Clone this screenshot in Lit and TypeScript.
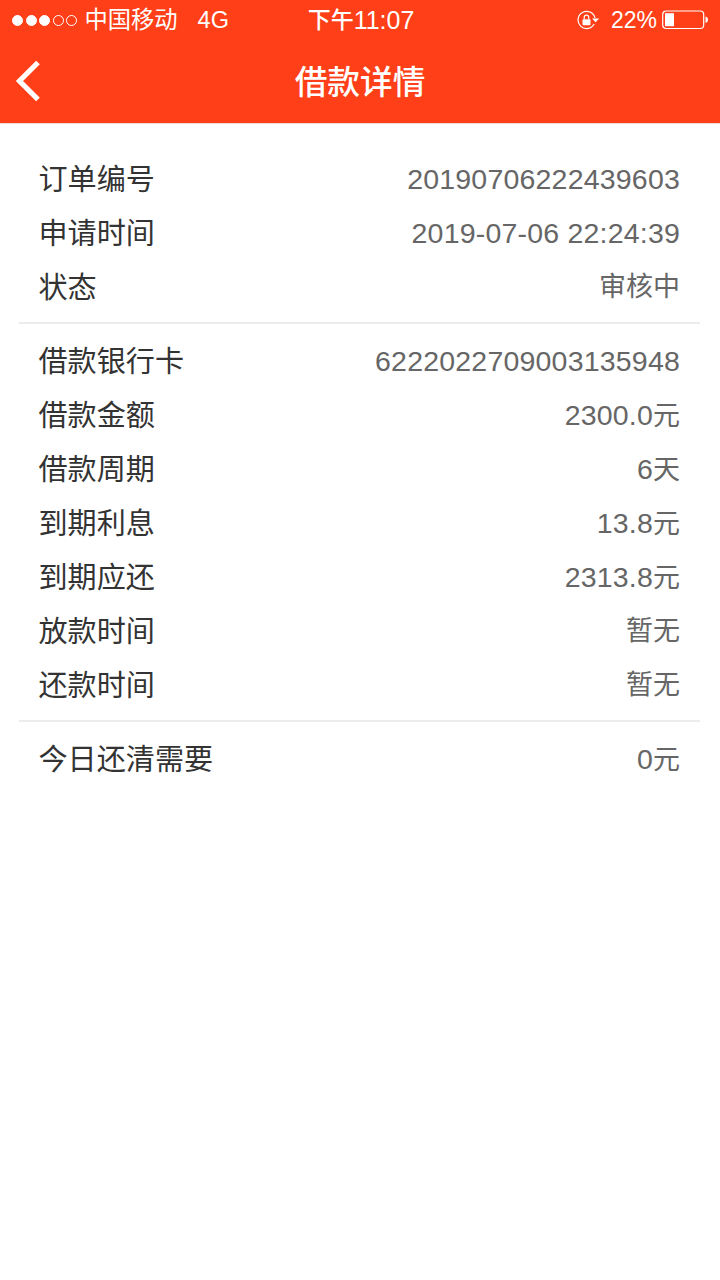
import { LitElement, html, css, svg } from "lit";
import { customElement } from "lit/decorators.js";

type Row = [string, string];
const sections: Row[][] = [
  [["订单编号", "20190706222439603"], ["申请时间", "2019-07-06 22:24:39"], ["状态", "审核中"]],
  [
    ["借款银行卡", "6222022709003135948"],
    ["借款金额", "2300.0元"],
    ["借款周期", "6天"],
    ["到期利息", "13.8元"],
    ["到期应还", "2313.8元"],
    ["放款时间", "暂无"],
    ["还款时间", "暂无"],
  ],
  [["今日还清需要", "0元"]],
];

@customElement("app-root")
export class AppRoot extends LitElement {
  static styles = css`
    :host {
      display: block;
      width: 720px;
      height: 1280px;
      background: #fff;
      font-family: "Liberation Sans", "Noto Sans CJK SC", sans-serif;
      overflow: hidden;
    }
    .top { background: #ff3f17; height: 123px; color: #fff; border-bottom: 1px solid #eadbd6; }
    .status { height: 40px; display: grid; grid-template-columns: 1fr auto 1fr; align-items: center; padding: 0 12px 0 12px; font-size: 23px; white-space: nowrap; }
    .left, .right { display: flex; align-items: center; }
    .right { justify-content: flex-end; }
    .dots { display: flex; gap: 2.6px; margin-right: 7px; }
    .dot { width: 11px; height: 11px; border-radius: 50%; border: 1.1px solid #fff; box-sizing: border-box; }
    .dot.on { background: #fff; }
    .cjk { line-height: 40px; height: 40px; font-size: 23.3px; }
    .net { margin-left: 20px; font-size: 23.5px; }
    .time { display: flex; align-items: center; height: 40px; font-weight: 500; margin-left: 2px; }
    .time .c { font-size: 23px; line-height: 40px; }
    .time .d { font-size: 25px; }
    .lock { margin-right: 10px; display: block; }
    .pct { margin-right: 5px; font-size: 23px; }
    .bar { height: 83px; padding-bottom: 5px; box-sizing: border-box; display: flex; align-items: center; justify-content: center; position: relative; }
    .back { position: absolute; left: 14px; top: 19px; display: block; }
    .title { font-size: 32.7px; font-weight: 500; }
    .sec { padding: 0 20px 0 19px; }
    .inner { border-bottom: 2px solid #ececec; }
    .sec:last-child .inner { border-bottom: 0; }
    .s0 .inner { padding: 28px 0 8px; }
    .s1 .inner { padding: 10px 0 8px; }
    .s2 .inner { padding: 10px 0 0; }
    .row { height: 54px; display: flex; justify-content: space-between; align-items: center; padding: 0 20px; white-space: nowrap; }
    .k { font-size: 29.1px; color: #333; padding-bottom: 4px; margin-left: -0.5px; }
    .s1 .k { padding-bottom: 5px; }
    .v { font-size: 27px; line-height: 34px; color: #666; }
    .v span { line-height: 34px; }
    .n { font-size: 28.5px; letter-spacing: 0.2px; }
  `;

  private value(v: string) {
    const parts = v.match(/[\x00-\x7f]+|[^\x00-\x7f]+/g) ?? [];
    return parts.map((p) => (/^[\x00-\x7f]/.test(p) ? html`<span class="n">${p}</span>` : html`<span class="h">${p}</span>`));
  }

  render() {
    return html`
      <div class="top">
        <div class="status">
          <div class="left">
            <div class="dots">
              ${[1, 1, 1, 0, 0].map((d) => html`<div class="dot ${d ? "on" : ""}"></div>`)}
            </div>
            <span class="cjk">中国移动</span><span class="net">4G</span>
          </div>
          <div class="time"><span class="c">下午</span><span class="d">11:07</span></div>
          <div class="right">
            <svg class="lock" width="24" height="20" viewBox="0 0 24 20">
              ${svg`<path d="M17.2 14A8.6 8.6 0 1 1 18 8" fill="none" stroke="#fff" stroke-width="1.2"/>
              <path d="M15 8.6h7.2l-3.6 3.6z" fill="#fff"/>
              <rect x="5.5" y="9.2" width="8" height="6" rx="1" fill="#fff"/>
              <path d="M7.2 9.2V7.4a2.3 2.3 0 0 1 4.6 0v1.8" fill="none" stroke="#fff" stroke-width="1.2"/>`}
            </svg>
            <span class="pct">22%</span>
            <svg width="46" height="20" viewBox="0 0 46 20" style="display:block">
              ${svg`<rect x="0.7" y="1" width="41" height="17.5" rx="3.5" fill="none" stroke="#fff" stroke-width="1.2"/>
              <rect x="3" y="3.2" width="9" height="13" fill="#fff"/>
              <path d="M43.5 6.5c1.6.3 2.5 1.5 2.5 3.2s-.9 2.9-2.5 3.2z" fill="#fff"/>`}
            </svg>
          </div>
        </div>
        <div class="bar">
          <svg class="back" width="30" height="44" viewBox="0 0 30 44">
            ${svg`<path d="M24 3.5 5.5 22 24 40.5" fill="none" stroke="#fff" stroke-width="5.2"/>`}
          </svg>
          <div class="title">借款详情</div>
        </div>
      </div>
      ${sections.map(
        (rows, i) => html`
          <div class="sec s${i}">
            <div class="inner">
              ${rows.map(
                ([k, v]) => html`<div class="row"><span class="k">${k}</span><span class="v">${this.value(v)}</span></div>`
              )}
            </div>
          </div>
        `
      )}
    `;
  }
}
